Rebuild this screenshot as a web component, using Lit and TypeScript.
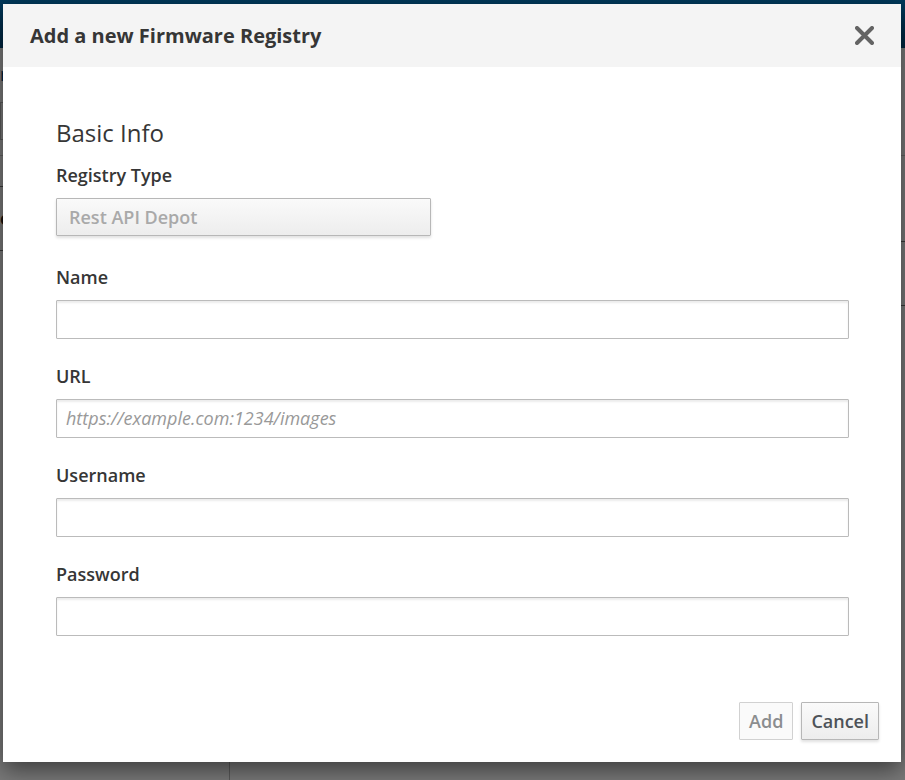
import { LitElement, html, css } from "lit";
import { customElement, property } from "lit/decorators.js";

@customElement("form-field")
class FormField extends LitElement {
  @property() label = "";
  @property() type = "text";
  @property() placeholder = "";

  static styles = css`
    :host {
      display: block;
    }
    .label {
      display: block;
      font-weight: 600;
      line-height: 30px;
      margin-bottom: 8px;
    }
    .input {
      display: block;
      box-sizing: border-box;
      width: 100%;
      height: 39px;
      padding: 0 9px 2px;
      border: 1px solid #bbb;
      border-radius: 1px;
      background: #fff;
      color: #363636;
      font: inherit;
      box-shadow: inset 0 2px 2px rgba(3, 3, 3, 0.08);
    }
    .input::placeholder {
      color: #999;
      opacity: 1;
      font-style: italic;
    }
  `;

  render() {
    return html`
      <label class="label" for="field">${this.label}</label>
      <input class="input" id="field" type=${this.type} placeholder=${this.placeholder} />
    `;
  }
}

@customElement("registry-dialog")
class RegistryDialog extends LitElement {
  static styles = css`
    :host {
      display: block;
    }
    .dialog {
      background: #fff;
      box-shadow: 0 8px 22px rgba(0, 0, 0, 0.5);
    }
    .header {
      display: flex;
      align-items: center;
      justify-content: space-between;
      height: 63px;
      padding: 0 27px;
      background: #f4f4f4;
    }
    .title {
      margin: 0;
      font-size: 20px;
      font-weight: 700;
      line-height: 28px;
    }
    .close {
      display: flex;
      padding: 0;
      border: 0;
      background: none;
      color: #636363;
    }
    .form {
      padding: 49px 52px 60px 53px;
    }
    .section {
      margin: 0 0 10px;
      font-size: 24px;
      font-weight: 400;
      line-height: 34px;
    }
    .label {
      display: block;
      font-weight: 600;
      line-height: 30px;
      margin-bottom: 8px;
    }
    .select,
    .button {
      box-sizing: border-box;
      height: 38px;
      border: 1px solid #b7b7b7;
      border-radius: 1px;
      background: linear-gradient(#fafafa, #ededed);
      box-shadow: 0 2px 3px rgba(3, 3, 3, 0.12);
      color: #4d5258;
      font: inherit;
      font-weight: 600;
    }
    .select {
      appearance: none;
      display: block;
      width: 375px;
      max-width: 100%;
      padding: 0 12px;
    }
    .select:disabled {
      color: #a9a9a9;
      opacity: 1;
    }
    .fields {
      display: grid;
      gap: 22px;
      margin-top: 26px;
    }
    .footer {
      display: flex;
      justify-content: flex-end;
      gap: 8px;
      padding: 6px 22px 22px;
    }
    .button {
      padding: 0 9px;
    }
    .button:disabled {
      border-color: #d1d1d1;
      background: #fafafa;
      box-shadow: none;
      color: #8b8d8f;
    }
  `;

  render() {
    return html`
      <section class="dialog" role="dialog" aria-labelledby="title">
        <header class="header">
          <h1 class="title" id="title">Add a new Firmware Registry</h1>
          <button class="close" type="button" aria-label="Close">
            <svg width="19" height="19" viewBox="0 0 19 19" fill="none" stroke="currentColor" stroke-width="4" stroke-linecap="round">
              <path d="M2 2L17 17M17 2L2 17" />
            </svg>
          </button>
        </header>
        <form>
          <div class="form">
            <h2 class="section">Basic Info</h2>
            <label class="label" for="kind">Registry Type</label>
            <select class="select" id="kind" disabled>
              <option>Rest API Depot</option>
            </select>
            <div class="fields">
              <form-field label="Name"></form-field>
              <form-field label="URL" placeholder="https://example.com:1234/images"></form-field>
              <form-field label="Username"></form-field>
              <form-field label="Password" type="password"></form-field>
            </div>
          </div>
          <footer class="footer">
            <button class="button" type="submit" disabled>Add</button>
            <button class="button" type="button">Cancel</button>
          </footer>
        </form>
      </section>
    `;
  }
}

@customElement("app-root")
class AppRoot extends LitElement {
  static styles = css`
    :host {
      display: block;
      position: relative;
      min-height: 100vh;
      overflow: hidden;
      color: #363636;
      font-family: "Open Sans", sans-serif;
      font-size: 18px;
      line-height: 30px;
    }
    /* The dimmed page that the dialog covers. */
    .page {
      display: grid;
      grid-template-rows: 48px 108px 1fr;
      min-height: 100vh;
      background: #7a7a7a;
    }
    .masthead {
      background: linear-gradient(#00395b, #00253f);
    }
    .toolbar {
      border-bottom: 1px solid #626262;
      padding-top: 11px;
      box-sizing: border-box;
    }
    .crumb {
      height: 30px;
      color: #00223a;
    }
    .filter {
      width: 200px;
      height: 36px;
      margin-top: 13px;
      border: 1px solid #5a5a5a;
    }
    .content {
      display: grid;
      grid-template-columns: 230px 1fr;
    }
    .sidebar {
      border-right: 1px solid #5a5a5a;
    }
    .heading {
      height: 63px;
      margin-top: 30px;
      border: solid #3a3a3a;
      border-width: 1px 0;
      color: #111;
      font-weight: 700;
      line-height: 63px;
    }
    .row {
      height: 63px;
      margin-top: 85px;
      border: solid #3a3a3a;
      border-width: 1px 0;
    }
    .overlay {
      position: absolute;
      inset: 0;
      padding: 4px 4px 0 3px;
    }
  `;

  render() {
    return html`
      <div class="page" aria-hidden="true">
        <div class="masthead"></div>
        <div class="toolbar">
          <div class="crumb">r</div>
          <div class="filter"></div>
        </div>
        <div class="content">
          <div class="sidebar"><div class="heading">e</div></div>
          <div><div class="row"></div></div>
        </div>
      </div>
      <div class="overlay"><registry-dialog></registry-dialog></div>
    `;
  }
}
